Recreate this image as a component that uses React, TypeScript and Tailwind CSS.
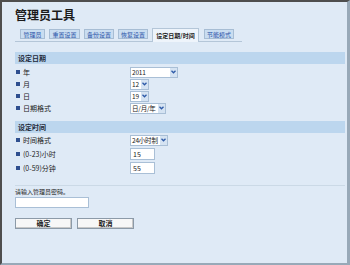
import React from 'react';

const font = { fontFamily: '"Noto Sans CJK SC", "Liberation Sans", sans-serif' };

const tabs = [
    { t: '管理员', w: 'w-[25px]' },
    { t: '重置设置', w: 'w-[31px]' },
    { t: '备份设置', w: 'w-[30px]' },
    { t: '恢复设置', w: 'w-[30px]' },
    { t: '设定日期/时间', w: 'w-[47px]' },
    { t: '节能模式', w: 'w-[30px]' },
];

const Chevron = () => (
    <svg width="5" height="4" viewBox="0 0 5 4" className="block">
        <path d="M0.5 0.8 L2.5 2.8 L4.5 0.8" fill="none" stroke="#2d5aa8" strokeWidth="1.3" />
    </svg>
);

const SelectBox = ({ value, width }: { value: string; width: string }) => (
    <div className={`flex h-[11px] items-stretch border border-[#a9bfd6] bg-white ${width}`}>
        <span className="flex-1 overflow-hidden whitespace-nowrap pl-[1px] text-[6.5px] leading-[9px] tracking-[-0.2px] text-[#222]">{value}</span>
        <span className="flex w-[7px] shrink-0 items-center justify-center bg-[#d5e3f2]">
            <Chevron />
        </span>
    </div>
);

const InputBox = ({ value, width }: { value: string; width: string }) => (
    <div className={`h-[12px] border border-[#a9bfd6] bg-white pl-[2px] text-[7px] leading-[10px] text-[#222] ${width}`}>
        {value}
    </div>
);

const Row = ({ label, children }: { label: string; children: React.ReactNode }) => (
    <div className="flex h-[12px] items-center">
        <div className="flex w-[115px] items-center gap-[3px] pl-[1px]">
            <span className="h-[4px] w-[4px] bg-[#2f4f8f]" />
            <span className="whitespace-nowrap text-[7px] leading-none text-[#222]">{label}</span>
        </div>
        {children}
    </div>
);

const SectionHeader = ({ title }: { title: string }) => (
    <div className="flex h-[12px] items-center bg-[#bcd6ee] pl-[3px] text-[7px] font-bold leading-none text-[#1e2a3a]">
        {title}
    </div>
);

export default function App() {
    return (
        <div style={font} className="h-[265px] w-[350px] overflow-hidden border-b-2 border-l-2 border-r-[3px] border-t-2 border-b-[#98a9b8] border-l-[#4e4e4e] border-r-[#98a9b8] border-t-[#4e4e4e] bg-[#dfeaf6]">
            <div className="pl-[13px] pt-[6px]">
                <div className="text-[12px] font-bold leading-[14px] text-[#1a1a1a]">管理员工具</div>

                <div className="mt-[6px] flex h-[14px] w-[227px] items-end border-b border-[#b4c6d8] pl-[5px]">
                    {tabs.map(({ t, w }, i) => {
                        const active = i === 4;
                        return (
                            <div
                                key={t}
                                className={
                                    active
                                        ? `mr-[5px] -mb-px flex h-[14px] items-center justify-center whitespace-nowrap border border-b-0 border-[#b4c6d8] bg-[#eef4fb] text-[6px] font-bold text-[#222] ${w}`
                                        : `mr-[4px] mb-[2px] flex h-[10px] items-center justify-center whitespace-nowrap border border-[#a7bdd4] bg-[#c9ddf1] text-[6px] text-[#2a54a8] ${w}`
                                }
                            >
                                {t}
                            </div>
                        );
                    })}
                </div>

                <div className="mr-[2px] mt-[10px]">
                    <SectionHeader title="设定日期" />
                    <div className="flex flex-col pt-[2px]">
                        <Row label="年"><SelectBox value="2011" width="w-[48px]" /></Row>
                        <Row label="月"><SelectBox value="12" width="w-[19px]" /></Row>
                        <Row label="日"><SelectBox value="19" width="w-[19px]" /></Row>
                        <Row label="日期格式"><SelectBox value="日/月/年" width="w-[36px]" /></Row>
                    </div>

                    <div className="mt-[7px]">
                        <SectionHeader title="设定时间" />
                    </div>
                    <div className="flex flex-col gap-[2px] pt-[1px]">
                        <Row label="时间格式"><SelectBox value="24小时制" width="w-[38px]" /></Row>
                        <Row label="(0-23)小时"><InputBox value="15" width="w-[25px]" /></Row>
                        <Row label="(0-59)分钟"><InputBox value="55" width="w-[25px]" /></Row>
                    </div>

                    <div className="mt-[11px] border-t border-[#cbd9e6]" />

                    <div className="pt-px text-[6px] leading-[9px] text-[#222]">请输入管理员密码。</div>
                    <div className="mt-[1px] h-[11px] w-[74px] border border-[#a9bfd6] bg-white" />

                    <div className="mt-[10px] flex gap-[5px]">
                        <button className="h-[11px] w-[57px] border border-[#8c9aa8] bg-[#f7f7f7] text-[7px] font-bold leading-none text-[#222] shadow-[inset_-1px_-1px_0_#c8c8c8]">确定</button>
                        <button className="h-[11px] w-[57px] border border-[#8c9aa8] bg-[#f7f7f7] text-[7px] font-bold leading-none text-[#222] shadow-[inset_-1px_-1px_0_#c8c8c8]">取消</button>
                    </div>
                </div>
            </div>
        </div>
    );
}
